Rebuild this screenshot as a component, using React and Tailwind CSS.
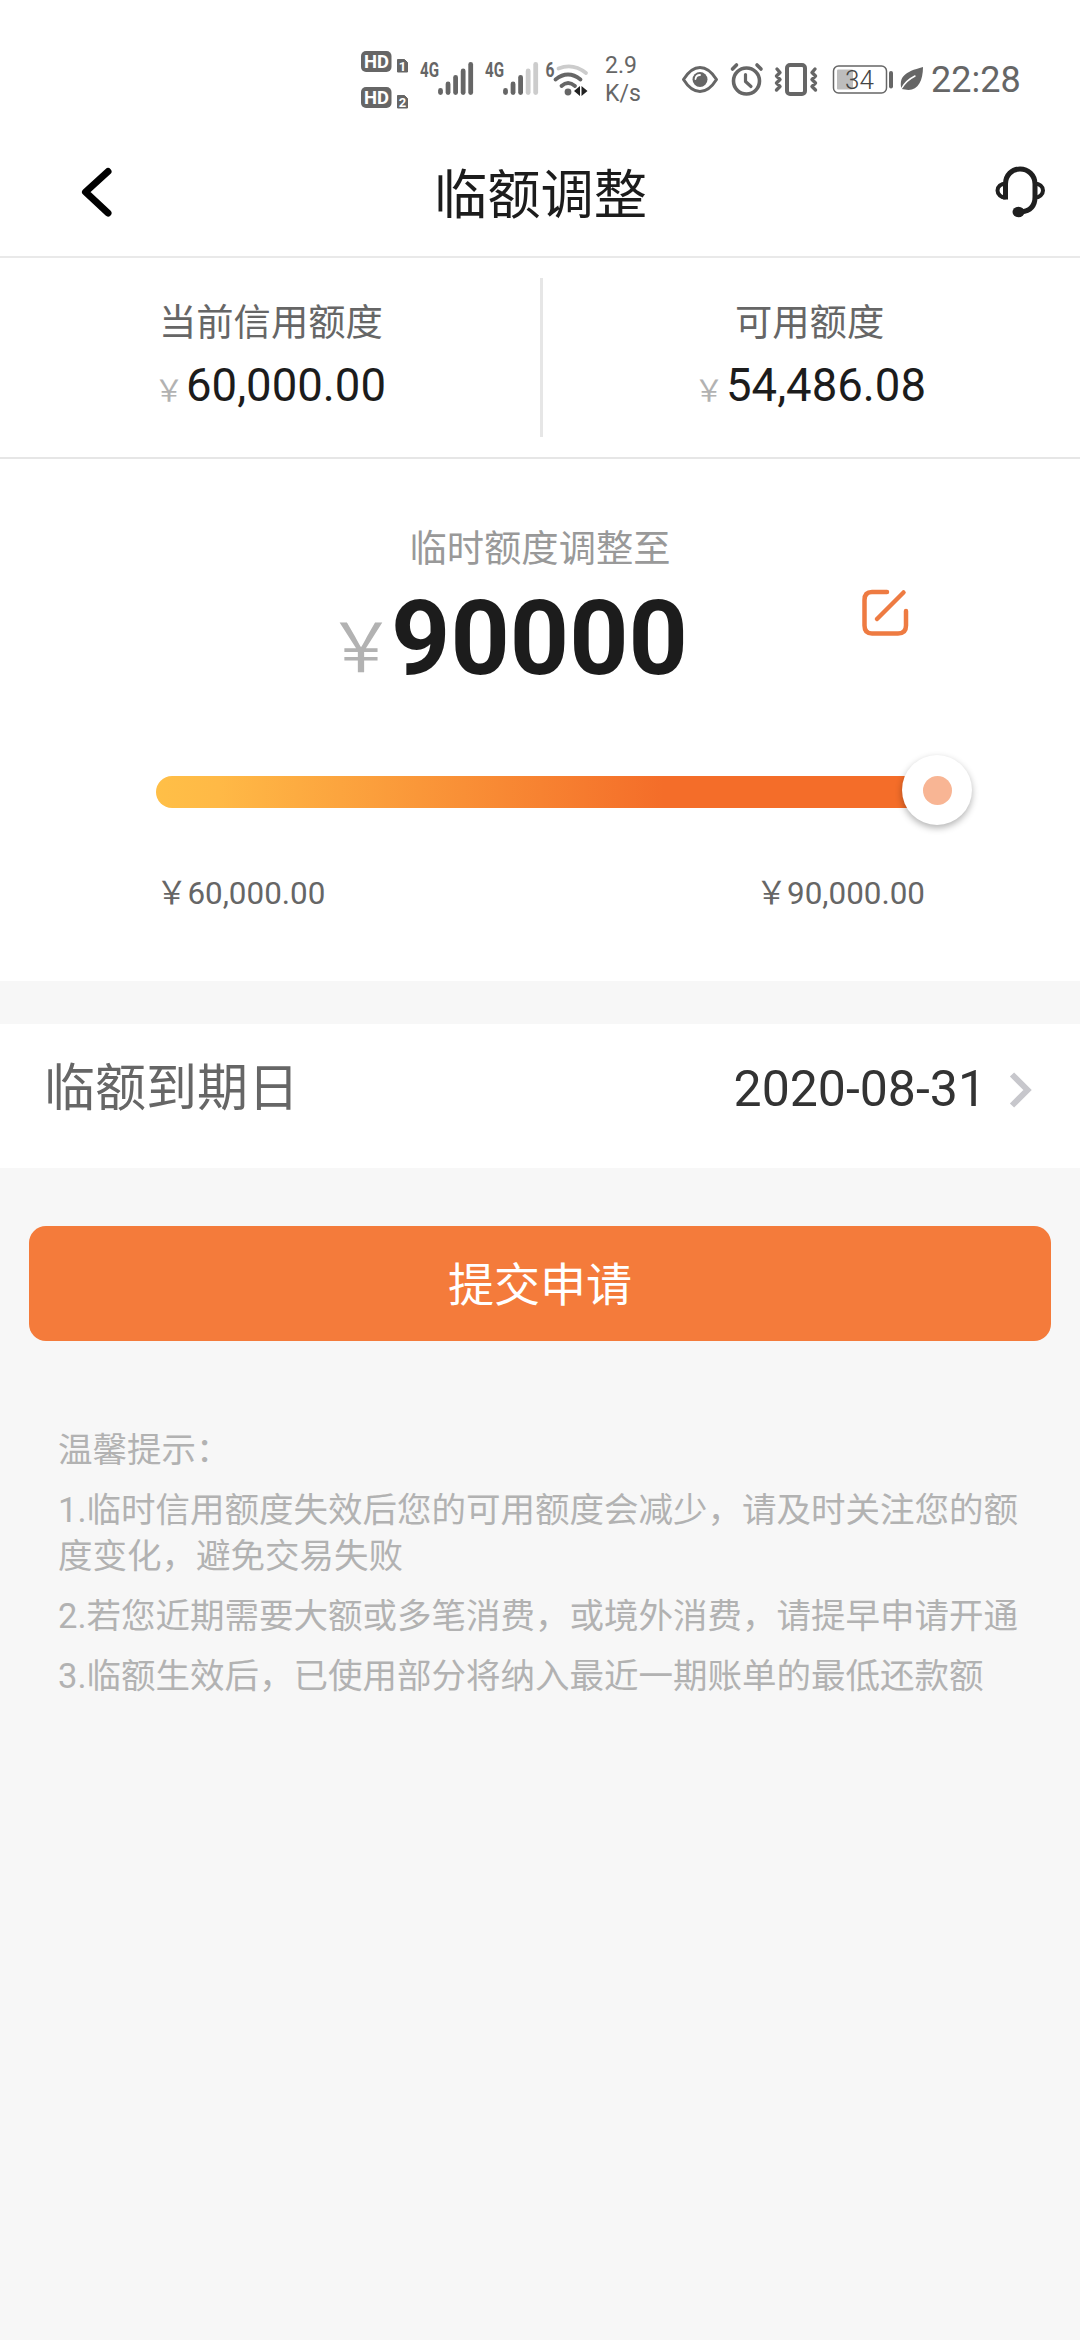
function StatusIconsLeft() {
  return (
    <svg className="w-[240px] h-[80px] shrink-0" viewBox="350 40 240 80" fill="none" fontFamily="Roboto, sans-serif" fontWeight="700">
      {[51, 87].map((y, i) => (
        <g key={y}>
          <rect x="361" y={y} width="30.5" height="21" rx="5" fill="#666" />
          <text x="364" y={y + 17} fontSize="18.5" fill="#fff" textLength="25" lengthAdjust="spacingAndGlyphs">HD</text>
          <path d={`M397.500 ${y + 8.5}h7l3 3v9.500h-10z`} fill="#666" stroke="#666" strokeLinejoin="round" />
          <text x="398.800" y={y + 20} fontSize="13" fill="#fff">{i + 1}</text>
        </g>
      ))}
      {[0, 65].map((dx) => (
        <g key={dx}>
          <text x={420 + dx} y="76.500" fontSize="20" fill="#666" textLength="19" lengthAdjust="spacingAndGlyphs">4G</text>
          {[0, 1, 2, 3, 4].map((i) => (
            <path
              key={i}
              d={`M${440.5 + dx + i * 7.55} 92.500V${90.5 - i * 6.5}`}
              stroke={dx && i > 2 ? '#ccc' : '#666'}
              strokeWidth="4.800"
              strokeLinecap="round"
            />
          ))}
        </g>
      ))}
      <text x="545.500" y="76.500" fontSize="20" fill="#666" textLength="9" lengthAdjust="spacingAndGlyphs">6</text>
      <g strokeWidth="3.800" strokeLinecap="round">
        <path d="M558.500 68.500Q573 62.500 586 73" stroke="#ccc" />
        <path d="M555.500 79.500Q568 69.500 580.500 79.500" stroke="#666" />
        <path d="M561.500 86Q568 80 575 86" stroke="#666" />
      </g>
      <circle cx="568" cy="92" r="3.400" fill="#666" />
      <path d="M574 91l6-5v10zM581.500 86v10l6-5z" fill="#222" />
    </svg>
  );
}

function StatusIconsRight() {
  return (
    <svg className="w-[251px] h-[80px] shrink-0" viewBox="680 40 251 80" fill="none" stroke="#666" strokeLinecap="round" strokeLinejoin="round">
      <path d="M683.500 79.500Q691 67.500 700 67.500T716.500 79.500Q709 91.500 700 91.500T683.500 79.500Z" strokeWidth="3" />
      <circle cx="700" cy="79.500" r="7.500" fill="#666" stroke="none" />
      <path d="M695.500 79a4.500 4.500 0 0 1 4.500-4" stroke="#fff" strokeWidth="1.800" />
      <circle cx="746.500" cy="81" r="13" strokeWidth="3.600" />
      <path d="M745.500 74.500V81.500L751 86.500" strokeWidth="3.200" />
      <path d="M732.500 69l4-4M761 69l-4-4" strokeWidth="3.600" />
      <rect x="787" y="65" width="18" height="29" rx="3" strokeWidth="4" />
      <path d="M777 69l3 3.500-3.500 3.500 3.500 3.500-3.500 3.500 3.500 3.500-3.500 3.500M815 69l-3 3.500 3.500 3.500-3.500 3.500 3.500 3.500-3.500 3.500 3.500 3.500" strokeWidth="3.400" />
      <rect x="833.500" y="66" width="53" height="27" rx="5" strokeWidth="1.500" />
      <rect x="837" y="69.500" width="16" height="20" rx="1" fill="#bdbdbd" stroke="none" />
      <text x="845" y="89" fontSize="26" fontFamily="Roboto, sans-serif" fontWeight="300" fill="#444" stroke="none">34</text>
      <path d="M891 73V86.500" strokeWidth="4" />
      <path d="M901.500 89C899 77 904 72 923 67C923 82 917 92 905 89.500Z" fill="#666" stroke="none" />
      <path d="M901.500 88.500Q906 80.500 915 76" stroke="#fff" strokeWidth="1.400" />
    </svg>
  );
}

function Limit({ label, amount, labelClass }) {
  return (
    <div>
      <div className={labelClass}>{label}</div>
      <div className="flex items-baseline h-[60px] mt-[10px] leading-[60px]">
        <span className="text-[30px] text-[#b2b2b2] w-[32px] shrink-0">￥</span>
        <span className="text-[45.500px] text-[#1c1c1c]">{amount}</span>
      </div>
    </div>
  );
}

const tips = [
  '温馨提示：',
  '1.临时信用额度失效后您的可用额度会减少，请及时关注您的额度变化，避免交易失败',
  '2.若您近期需要大额或多笔消费，或境外消费，请提早申请开通',
  '3.临额生效后，已使用部分将纳入最近一期账单的最低还款额',
];

export default function App() {
  return (
    <div className="w-[1080px] h-[2340px] bg-[#f7f7f7] font-['Roboto','Noto_Sans_CJK_SC',sans-serif] overflow-hidden" lang="zh-CN">
      <div className="h-[128px] pt-10 pl-[350px] flex items-start bg-white text-[#666]">
        <StatusIconsLeft />
        <div className="w-[90px] pl-[15px] pt-[12px] text-[23px] leading-[28px]">
          <div>2.9</div>
          <div>K/s</div>
        </div>
        <StatusIconsRight />
        <div className="text-[36px] leading-[81px] whitespace-nowrap">22:28</div>
      </div>

      <header className="h-[130px] bg-white border-b-2 border-[#e9e9e9] flex items-center justify-between">
        <svg className="w-[120px] h-[128px]" viewBox="0 128 120 128" fill="none">
          <path d="M108 171.500L85.500 192L108 213" stroke="#000" strokeWidth="7" strokeLinecap="round" strokeLinejoin="round" />
        </svg>
        <h1 className="text-[53.300px] leading-[80px] text-[#1c1c1c] pl-px pt-2">临额调整</h1>
        <svg className="w-[120px] h-[128px]" viewBox="960 128 120 128" fill="none" stroke="#1f1f1f" strokeWidth="5">
          <path d="M1005.500 199.500V184C1005.500 175 1012 169 1020 169S1035 175 1035 184V197C1035 206 1030 211 1021 212" />
          <path d="M1005.500 183.500A8 7 0 0 0 1005.500 197.500M1035 183.500A8 7 0 0 1 1035 197.500" strokeWidth="4" />
          <ellipse cx="1018.500" cy="212" rx="6" ry="5.200" fill="#1f1f1f" stroke="none" />
        </svg>
      </header>

      <section className="h-[201px] bg-white border-b-2 border-[#e6e6e6] flex pt-5">
        <div className="w-[540px] pt-[22px] pl-[154px]">
          <Limit label="当前信用额度" labelClass="h-[46px] leading-[46px] text-[37.300px] text-[#666] pl-[5px]" amount="60,000.00" />
        </div>
        <div className="w-[3px] h-[159px] bg-[#e6e6e6]" />
        <div className="w-[537px] pt-[22px] pl-[151px]">
          <Limit label="可用额度" labelClass="h-[46px] leading-[46px] text-[37.300px] text-[#666] pl-[41px]" amount="54,486.08" />
        </div>
      </section>

      <section className="h-[522px] bg-white pt-[66px]">
        <div className="h-[48px] leading-[48px] text-center text-[37.300px] text-[#999]">临时额度调整至</div>
        <div className="flex h-[120px] mt-[6px] leading-[120px] pl-[327px]">
          <div className="flex items-baseline w-[534px]">
            <span className="text-[68px] text-[#b2b2b2] -translate-y-[2px]">￥</span>
            <span className="text-[103.500px] font-bold text-[#1c1c1c] -ml-[4px]">90000</span>
          </div>
          <svg className="w-12 h-12 mt-[9px]" viewBox="860 588 48 48" fill="none" stroke="#ee7b42" strokeWidth="4.500" strokeLinecap="round" strokeLinejoin="round">
            <path d="M886 592H871Q863.500 592 863.500 600V625.500Q863.500 633.500 871 633.500H897Q905 633.500 905 625.500V611" />
            <path d="M902.500 592.500L876 619" />
          </svg>
        </div>
        <div className="mt-[56px] ml-[156px] w-[816px] h-[70px] flex items-center">
          <div className="w-[781px] h-8 mt-[3px] rounded-l-full bg-[linear-gradient(90deg,#ffbf47_0%,#ffb946_8%,#f46d29_65%,#f46d29_100%)]" />
          <div className="w-[70px] h-[70px] -ml-[35px] shrink-0 rounded-full bg-white shadow-[0_3px_7px_rgba(0,0,0,0.3)] flex items-center justify-center">
            <div className="w-[29px] h-[29px] rounded-full bg-[#f8b594]" />
          </div>
        </div>
        <div className="mt-[49px] ml-[156px] w-[769px] flex justify-between text-[31.400px] leading-[39px] text-[#666]">
          <span>￥60,000.00</span>
          <span>￥90,000.00</span>
        </div>
      </section>

      <section className="mt-[43px] h-[144px] bg-white flex justify-between pl-11 pr-12 pt-[25px] text-[50px] leading-[80px]">
        <span className="text-[#666] text-[51px]">临额到期日</span>
        <span className="flex text-[#333]">
          2020-08-31
          <svg className="w-6 h-9 mt-[23px] ml-[22px]" viewBox="0 0 24 36" fill="none" stroke="#c7c7cc" strokeWidth="6">
            <path d="M4 2.500L19.500 18L4 33.500" />
          </svg>
        </span>
      </section>

      <button className="block mt-[58px] ml-[29px] w-[1022px] h-[115px] pt-[3px] rounded-[17px] bg-[#f47b3b] text-white text-[46px]">提交申请</button>

      <div className="mt-[86px] ml-[58px] w-[966px] flex flex-col gap-[14px] text-[34.500px] leading-[46px] text-[#b2b2b2]">
        {tips.map((t) => (
          <p key={t}>{t}</p>
        ))}
      </div>
    </div>
  );
}
